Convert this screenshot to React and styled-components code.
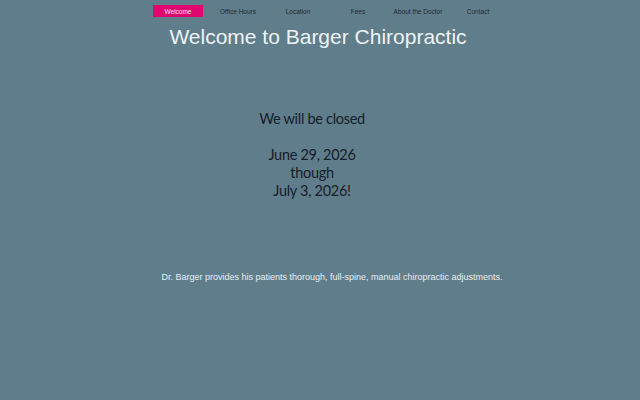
import React from "react";
import styled, { createGlobalStyle } from "styled-components";

const Global = createGlobalStyle`
  html, body { margin: 0; padding: 0; background: #607d8b; }
  body { width: 640px; height: 400px; overflow: hidden; }
`;

const Page = styled.div`
  display: flex;
  flex-direction: column;
  width: 640px;
  height: 400px;
  background: #607d8b;
`;

const Nav = styled.nav`
  display: flex;
  padding: 5px 0 0 148px;
  height: 12px;
`;

const NavItem = styled.a`
  width: 50px;
  height: 12px;
  margin: 0 5px;
  display: flex;
  align-items: center;
  justify-content: center;
  font-family: "Liberation Sans", Arial, sans-serif;
  font-size: 6.5px;
  color: ${p => (p.$active ? "#f4e9f0" : "#1f2b33")};
  background: ${p => (p.$active ? "#e0066f" : "transparent")};
  text-decoration: none;
  white-space: nowrap;
`;

const Title = styled.h1`
  margin: 7px 0 0;
  padding-right: 4px;
  text-align: center;
  font-family: "Liberation Sans", Arial, sans-serif;
  font-weight: normal;
  font-size: 21px;
  line-height: 26px;
  color: #eef3f6;
`;

const Notice = styled.div`
  margin-top: 60px;
  padding-right: 16px;
  text-align: center;
  font-family: Lato, "Open Sans", sans-serif;
  font-size: 14.5px;
  letter-spacing: -0.3px;
  line-height: 18px;
  color: #15202a;
`;

const Line = styled.p`
  margin: 0;
  height: ${p => (p.$blank ? "18px" : "auto")};
`;

const Blurb = styled.p`
  margin: 72px 0 0;
  padding-left: 24px;
  text-align: center;
  font-family: "Liberation Sans", Arial, sans-serif;
  font-size: 9px;
  line-height: 11px;
  color: #e6edf1;
`;

const items = ["Welcome", "Office Hours", "Location", "Fees", "About the Doctor", "Contact"];

export default function App() {
  return (
    <Page>
      <Global />
      <Nav>
        {items.map((t, i) => (
          <NavItem key={t} $active={i === 0}>{t}</NavItem>
        ))}
      </Nav>
      <Title>Welcome to Barger Chiropractic</Title>
      <Notice>
        <Line>We will be closed</Line>
        <Line $blank />
        <Line>June 29, 2026</Line>
        <Line>though</Line>
        <Line>July 3, 2026!</Line>
      </Notice>
      <Blurb>Dr. Barger provides his patients thorough, full-spine, manual chiropractic adjustments.</Blurb>
    </Page>
  );
}
